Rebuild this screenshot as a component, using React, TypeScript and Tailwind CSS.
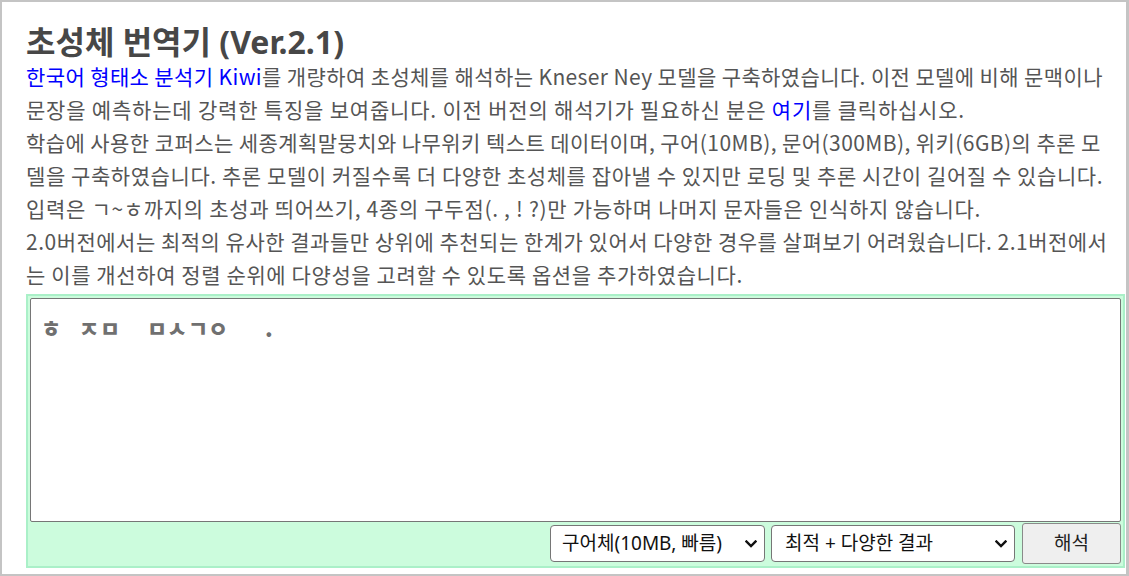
import React from "react";

const Chevron = () => (
  <svg width="12" height="8" viewBox="0 0 12 8" className="pointer-events-none absolute right-[8px] top-1/2 -translate-y-1/2">
    <path d="M1.5 1.5 L6 6 L10.5 1.5" fill="none" stroke="#111" strokeWidth="2.4" strokeLinecap="square" />
  </svg>
);

const J = ({ c, ml = "" }: { c: string; ml?: string }) => (
  <span className={`inline-block w-[20px] whitespace-nowrap ${ml}`}>{c}</span>
);

export default function App() {
  const font = { fontFamily: '"Noto Sans", "Noto Sans CJK KR", sans-serif' };
  const kr = { fontFamily: '"Noto Sans CJK KR", sans-serif' };
  return (
    <div
      className="w-[1129px] h-[576px] box-border border-2 border-r-[3px] border-[#c4c4c4] bg-white pl-[24px] pr-[1px] pt-[22px] overflow-hidden"
      style={font}
    >
      <h1 className="text-[32px] leading-[36px] font-bold text-[#474747] whitespace-nowrap">
        초성체 번역기 (Ver.2.1)
      </h1>
      <div className="text-[21px] leading-[33px] text-[#555555] whitespace-nowrap" style={kr}>
        <div className="tracking-[0.38px]">
          <a className="text-[#0000ff]">한국어 형태소 분석기 Kiwi</a>를 개량하여 초성체를 해석하는 Kneser Ney 모델을 구축하였습니다. 이전 모델에 비해 문맥이나
        </div>
        <div className="tracking-[0.8px]">
          문장을 예측하는데 강력한 특징을 보여줍니다. 이전 버전의 해석기가 필요하신 분은 <a className="text-[#0000ff]">여기</a>를 클릭하십시오.
        </div>
        <div className="tracking-[0.42px]">
          학습에 사용한 코퍼스는 세종계획말뭉치와 나무위키 텍스트 데이터이며, 구어(10MB), 문어(300MB), 위키(6GB)의 추론 모
        </div>
        <div className="tracking-[0.57px]">
          델을 구축하였습니다. 추론 모델이 커질수록 더 다양한 초성체를 잡아낼 수 있지만 로딩 및 추론 시간이 길어질 수 있습니다.
        </div>
        <div className="tracking-[0.69px]">
          입력은 ㄱ~ㅎ까지의 초성과 띄어쓰기, 4종의 구두점(. , ! ?)만 가능하며 나머지 문자들은 인식하지 않습니다.
        </div>
        <div className="tracking-[0.5px]">
          2.0버전에서는 최적의 유사한 결과들만 상위에 추천되는 한계가 있어서 다양한 경우를 살펴보기 어려웠습니다. 2.1버전에서
        </div>
        <div className="tracking-[0.6px]">는 이를 개선하여 정렬 순위에 다양성을 고려할 수 있도록 옵션을 추가하였습니다.</div>
      </div>
      <div className="mt-[3px] w-[1099px] h-[274px] box-border border-2 border-[#aaf0c8] bg-[#ccfcdd] p-[2px] flex flex-col">
        <div
          role="textbox"
          className="w-full h-[224px] box-border border border-[#767676] rounded-[2px] bg-white pl-[10px] pr-[10px] pt-[13px]"
          style={kr}
        >
          <div className="flex text-[22px] leading-[30px] font-black text-[#707070]">
            <J c="ㅎ" />
            <J c="ㅈ" ml="ml-[18px]" />
            <J c="ㅁ" ml="ml-[1px]" />
            <J c="ㅁ" ml="ml-[27px]" />
            <J c="ㅅ" />
            <J c="ㄱ" ml="ml-[1px]" />
            <J c="ㅇ" />
            <J c="." ml="ml-[37px]" />
          </div>
        </div>
        <div className="mt-[1px] flex justify-end items-center gap-[6px]">
          <div className="relative w-[215px] h-[37px]">
            <select className="appearance-none w-full h-full box-border border border-[#767676] rounded-[4px] bg-white pl-[11px] text-[19px] text-[#111] outline-none">
              <option>구어체(10MB, 빠름)</option>
            </select>
            <Chevron />
          </div>
          <div className="relative w-[244px] h-[37px]">
            <select className="appearance-none w-full h-full box-border border border-[#767676] rounded-[4px] bg-white pl-[13px] text-[19px] text-[#111] outline-none">
              <option>최적 + 다양한 결과</option>
            </select>
            <Chevron />
          </div>
          <button className="ml-[1px] w-[99px] h-[41px] box-border border border-[#8a8a8a] rounded-[3px] bg-[#efefef] text-[19px] text-[#222]">
            해석
          </button>
        </div>
      </div>
    </div>
  );
}
